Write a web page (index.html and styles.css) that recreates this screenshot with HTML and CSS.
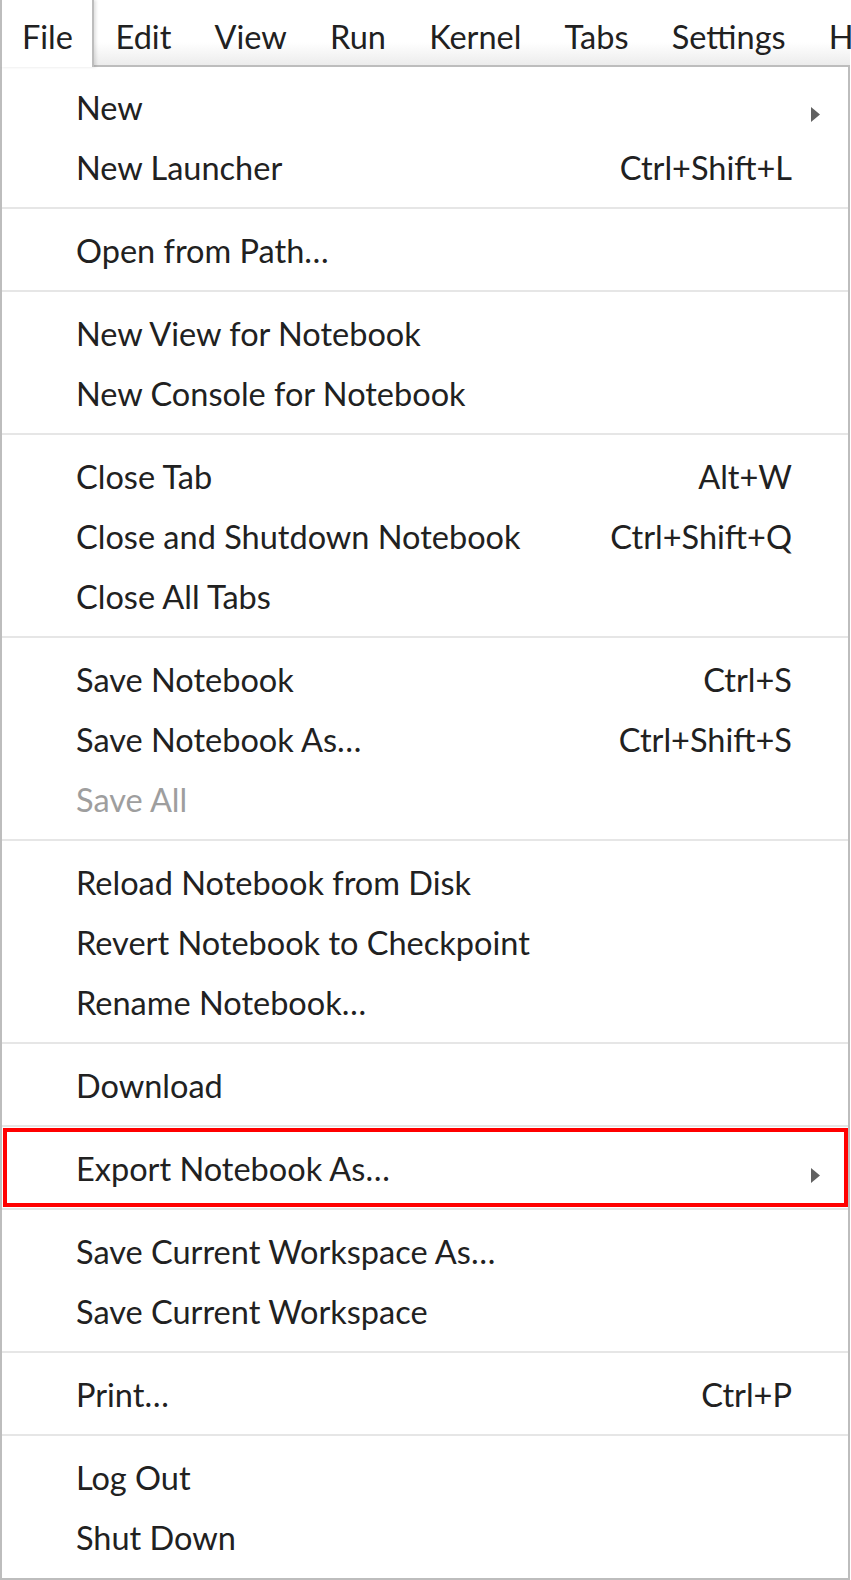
FILE: index.html
```html
<!DOCTYPE html>
<html>
<head>
<meta charset="utf-8">
<link rel="stylesheet" href="styles.css">
</head>
<body>
<div class="app">
  <div class="menubar">
    <div class="mb-item active">File</div>
    <div class="mb-item">Edit</div>
    <div class="mb-item">View</div>
    <div class="mb-item">Run</div>
    <div class="mb-item">Kernel</div>
    <div class="mb-item">Tabs</div>
    <div class="mb-item">Settings</div>
    <div class="mb-item">Help</div>
  </div>
  <div class="menu">
    <div class="item"><span class="label">New</span><span class="shortcut"></span><span class="sub"><svg class="arrow" width="9" height="15" viewBox="0 0 9 15"><path d="M0 0 L9 7.5 L0 15 Z"/></svg></span></div>
    <div class="item"><span class="label">New Launcher</span><span class="shortcut">Ctrl+Shift+L</span><span class="sub"></span></div>
    <div class="sep"></div>
    <div class="item"><span class="label">Open from Path…</span><span class="shortcut"></span><span class="sub"></span></div>
    <div class="sep"></div>
    <div class="item"><span class="label">New View for Notebook</span><span class="shortcut"></span><span class="sub"></span></div>
    <div class="item"><span class="label">New Console for Notebook</span><span class="shortcut"></span><span class="sub"></span></div>
    <div class="sep"></div>
    <div class="item"><span class="label">Close Tab</span><span class="shortcut">Alt+W</span><span class="sub"></span></div>
    <div class="item"><span class="label">Close and Shutdown Notebook</span><span class="shortcut">Ctrl+Shift+Q</span><span class="sub"></span></div>
    <div class="item"><span class="label">Close All Tabs</span><span class="shortcut"></span><span class="sub"></span></div>
    <div class="sep"></div>
    <div class="item"><span class="label">Save Notebook</span><span class="shortcut">Ctrl+S</span><span class="sub"></span></div>
    <div class="item"><span class="label">Save Notebook As…</span><span class="shortcut">Ctrl+Shift+S</span><span class="sub"></span></div>
    <div class="item disabled"><span class="label">Save All</span><span class="shortcut"></span><span class="sub"></span></div>
    <div class="sep"></div>
    <div class="item"><span class="label">Reload Notebook from Disk</span><span class="shortcut"></span><span class="sub"></span></div>
    <div class="item"><span class="label">Revert Notebook to Checkpoint</span><span class="shortcut"></span><span class="sub"></span></div>
    <div class="item"><span class="label">Rename Notebook…</span><span class="shortcut"></span><span class="sub"></span></div>
    <div class="sep"></div>
    <div class="item"><span class="label">Download</span><span class="shortcut"></span><span class="sub"></span></div>
    <div class="sep"></div>
    <div class="item highlighted"><span class="label">Export Notebook As…</span><span class="shortcut"></span><span class="sub"><svg class="arrow" width="9" height="15" viewBox="0 0 9 15"><path d="M0 0 L9 7.5 L0 15 Z"/></svg></span></div>
    <div class="sep"></div>
    <div class="item"><span class="label">Save Current Workspace As…</span><span class="shortcut"></span><span class="sub"></span></div>
    <div class="item"><span class="label">Save Current Workspace</span><span class="shortcut"></span><span class="sub"></span></div>
    <div class="sep"></div>
    <div class="item"><span class="label">Print…</span><span class="shortcut">Ctrl+P</span><span class="sub"></span></div>
    <div class="sep"></div>
    <div class="item"><span class="label">Log Out</span><span class="shortcut"></span><span class="sub"></span></div>
    <div class="item"><span class="label">Shut Down</span><span class="shortcut"></span><span class="sub"></span></div>
  </div>
</div>
</body>
</html>
```

FILE: styles.css
```css
html, body {
  margin: 0;
  padding: 0;
  background: #ffffff;
}

body {
  width: 851px;
  height: 1580px;
  overflow: hidden;
  font-family: Lato, "Open Sans", "DejaVu Sans", sans-serif;
  color: #212121;
}

.app {
  width: 850px;
}

.menubar {
  position: relative;
  z-index: 1;
  display: flex;
  height: 65px;
  border-bottom: 2px solid #bdbdbd;
  background: linear-gradient(to bottom, #ffffff 0%, #ffffff 65%, #ececec 100%);
  white-space: nowrap;
}

.mb-item {
  flex: none;
  height: 65px;
  padding: 8px 21.6px 0 21.6px;
  box-sizing: border-box;
  font-size: 32.5px;
  line-height: 57px;
  color: #212121;
}

.mb-item.active {
  background: #ffffff;
  border-left: 2px solid #bdbdbd;
  border-right: 2px solid #bdbdbd;
  height: 67px;
  padding-left: 20px;
  padding-right: 19px;
  position: relative;
  z-index: 2;
  box-shadow: 2px 0 3px rgba(0, 0, 0, 0.12);
}

.menu {
  border: 2px solid #bdbdbd;
  border-top: none;
  padding: 9px 0 12px 0;
  background: #ffffff;
}

.item {
  display: flex;
  align-items: flex-start;
  height: 60px;
  box-sizing: border-box;
  padding-top: 3px;
  padding-left: 74px;
  font-size: 32.5px;
  line-height: 57px;
  white-space: nowrap;
}

.item .label {
  flex: 1;
}

.item .shortcut {
  flex: none;
}

.item .sub {
  flex: none;
  width: 56px;
  height: 57px;
  box-sizing: border-box;
  padding-left: 19px;
  padding-top: 13px;
  display: flex;
  align-items: center;
}

.arrow path {
  fill: #616161;
}

.item.disabled {
  color: #9e9e9e;
}

.item.highlighted {
  position: relative;
}

.item.highlighted::after {
  content: "";
  position: absolute;
  left: 1px;
  right: 0;
  top: -9px;
  bottom: -10px;
  border: 4px solid #ff0000;
}

.sep {
  height: 23px;
  box-sizing: border-box;
  padding-top: 11px;
}

.sep::after {
  content: "";
  display: block;
  height: 2px;
  background: #e6e6e6;
}
```
